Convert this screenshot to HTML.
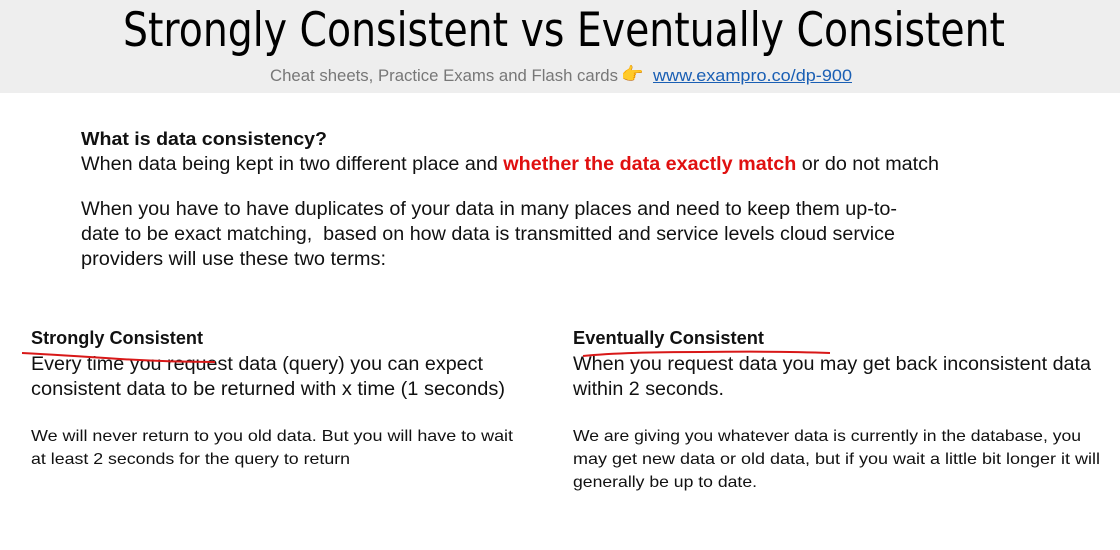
<!DOCTYPE html>
<html><head><meta charset="utf-8"><style>
html,body{margin:0;padding:0;width:1120px;height:550px;overflow:hidden;background:#fff;font-family:"Liberation Sans",sans-serif;color:#111}
.hdr{position:absolute;left:0;top:0;width:1120px;height:93px;background:#eeeeee}
.t{position:absolute;white-space:nowrap;transform-origin:0 0;line-height:1}
</style></head><body>
<div class="hdr"></div>
<div class="t" style="left:123px;top:7px;font-size:47px;color:#000;font-family:'DejaVu Sans',sans-serif;font-weight:normal" title="882">Strongly Consistent vs Eventually Consistent</div>
<div class="t" style="left:270px;top:67px;font-size:17px;color:#777" title="348">Cheat sheets, Practice Exams and Flash cards</div>
<div class="t" style="left:621px;top:65px;font-size:18px;color:#f0b020">👉</div>
<div class="t" style="left:653px;top:67px;font-size:17px;color:#1a5fb4;text-decoration:underline" title="199">www.exampro.co/dp-900</div>

<div class="t" style="left:81px;top:130px;font-size:18px;font-weight:bold" title="246">What is data consistency?</div>
<div class="t" style="left:81px;top:155px;font-size:19px" title="858">When data being kept in two different place and <b style="color:#e01010">whether the data exactly match</b> or do not match</div>
<div class="t" style="left:81px;top:200px;font-size:19px" title="816">When you have to have duplicates of your data in many places and need to keep them up-to-</div>
<div class="t" style="left:81px;top:225px;font-size:19px" title="814">date to be exact matching,&nbsp; based on how data is transmitted and service levels cloud service</div>
<div class="t" style="left:81px;top:250px;font-size:19px" title="305">providers will use these two terms:</div>

<div class="t" style="left:31px;top:329px;font-size:18px;font-weight:bold" title="172">Strongly Consistent</div>
<div class="t" style="left:31px;top:355px;font-size:19px" title="452">Every time you request data (query) you can expect</div>
<div class="t" style="left:31px;top:380px;font-size:19px" title="474">consistent data to be returned with x time (1 seconds)</div>
<div class="t" style="left:31px;top:429px;font-size:16px" title="482">We will never return to you old data. But you will have to wait</div>
<div class="t" style="left:31px;top:452px;font-size:16px" title="319">at least 2 seconds for the query to return</div>

<div class="t" style="left:573px;top:329px;font-size:18px;font-weight:bold" title="191">Eventually Consistent</div>
<div class="t" style="left:573px;top:355px;font-size:19px" title="518">When you request data you may get back inconsistent data</div>
<div class="t" style="left:573px;top:380px;font-size:19px" title="151">within 2 seconds.</div>
<div class="t" style="left:573px;top:429px;font-size:16px" title="508">We are giving you whatever data is currently in the database, you</div>
<div class="t" style="left:573px;top:452px;font-size:16px" title="527">may get new data or old data, but if you wait a little bit longer it will</div>
<div class="t" style="left:573px;top:475px;font-size:16px" title="184">generally be up to date.</div>

<svg style="position:absolute;left:0;top:0" width="1120" height="550">
<path d="M22 353 Q60 355 120 359 Q170 362 215 362" stroke="#d81818" stroke-width="2" fill="none"/>
<path d="M583 356 Q620 352 700 352 Q780 351 830 353" stroke="#d81818" stroke-width="2" fill="none"/>
</svg>
<script>
document.querySelectorAll('.t[title]').forEach(function(e){
  var w=parseFloat(e.getAttribute('title'));e.removeAttribute('title');
  var n=e.getBoundingClientRect().width;
  if(n>0)e.style.transform='scaleX('+(w/n)+')';
});
</script>
</body></html>
